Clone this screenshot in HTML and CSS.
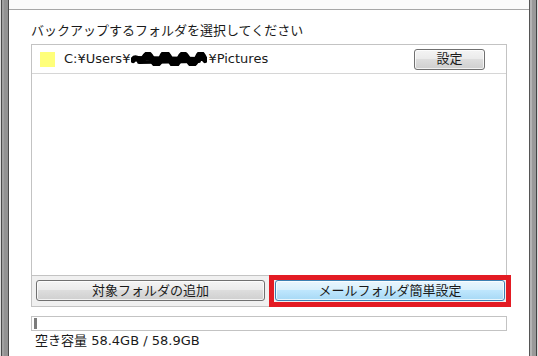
FILE: index.html
```html
<!DOCTYPE html>
<html lang="ja">
<head>
	<meta charset="UTF-8">
	<meta name="viewport" content="width=device-width, initial-scale=1.0">
	<link rel="stylesheet" href="styles.css">
	<title>バックアップ設定</title>
</head>
<body>
	<div class="window">
		<div class="frame frame-left"></div>
		<div class="client">
			<div class="titlebar"></div>
			<div class="content">
				<p class="heading">バックアップするフォルダを選択してください</p>
				<div class="panel">
					<ul class="folder-list">
						<li class="folder">
							<span class="swatch"></span>
							<span class="path">C:¥Users¥<svg class="redact" width="76" height="14" viewBox="0 0 76 14" aria-hidden="true"><path d="M2 8 C6 2 9 13 13 6 S19 3 22 9 S28 12 31 5 S37 2 40 9 S46 13 49 6 S55 3 58 9 S64 12 67 5 S72 4 74 8" fill="none" stroke="#000" stroke-width="6" stroke-linecap="round"/><path d="M4 6 L72 7 M8 10 L68 9" stroke="#000" stroke-width="4" stroke-linecap="round"/></svg>¥Pictures</span>
							<button class="btn btn-small">設定</button>
						</li>
					</ul>
					<div class="actions">
						<button class="btn btn-add">対象フォルダの追加</button>
						<div class="highlight">
							<button class="btn btn-hot">メールフォルダ簡単設定</button>
						</div>
					</div>
				</div>
				<div class="meter"><div class="meter-fill" style="width: 3px;"></div></div>
				<p class="free">空き容量 58.4GB / 58.9GB</p>
			</div>
		</div>
		<div class="frame frame-right"></div>
	</div>
</body>
</html>
```

FILE: styles.css
```css
* {
	box-sizing: border-box;
}

:root {
	--fg: #1a1a1a;
	--line: #c3c3c3;
	--face: #f0f0f0;
	--mark: #e31b23;
}

html, body {
	margin: 0;
	height: 100%;
}

body {
	background: #fff;
	color: var(--fg);
	font-family: "DejaVu Sans", "Noto Sans CJK JP", sans-serif;
	font-size: 13px;
	overflow: hidden;
}

p {
	margin: 0;
}

ul {
	margin: 0;
	padding: 0;
	list-style: none;
}

.window {
	display: flex;
	height: 356px;
}

.frame {
	width: 9px;
	flex-shrink: 0;
}
.frame-left {
	border-left: 1px solid #dcdcdc;
	background: linear-gradient(to right, #4a4a4a 0 1px, #a0a0a0 1px 3px, #929292 3px 7px, #4a4a4a 7px);
}
.frame-right {
	border-right: 1px solid #dcdcdc;
	background: linear-gradient(to right, #555 0 1px, #b4b4b4 1px 3px, #9a9a9a 3px 7px, #444 7px);
}

.client {
	flex: 1;
	display: flex;
	flex-direction: column;
}

.titlebar {
	height: 10px;
	border-bottom: 1px solid #a6a6a6;
	background: #fafafa;
}

.content {
	padding: 0 22px;
}

.heading {
	height: 34px;
	padding-top: 12px;
	line-height: 18px;
}

.panel {
	border: 1px solid var(--line);
}

.folder-list {
	height: 231px;
	background: #fff;
	border-bottom: 1px solid var(--line);
}

.folder {
	display: flex;
	align-items: center;
	height: 29px;
	padding: 0 21px 0 8px;
	border-bottom: 1px solid #d6d6d6;
}

.swatch {
	width: 15px;
	height: 15px;
	margin-right: 9px;
	background: #ffff7a;
}

.path {
	flex: 1;
	display: flex;
	align-items: center;
	line-height: 18px;
}

.redact {
	display: block;
	margin: 0 1px;
}

.btn {
	font: inherit;
	color: inherit;
	height: 21px;
	padding: 0;
	line-height: 18px;
	border: 1px solid #707070;
	border-radius: 3px;
	background: linear-gradient(#f4f4f4 0%, #ebebeb 45%, #dddddd 50%, #cfcfcf 100%);
	box-shadow: inset 0 0 0 1px rgba(255, 255, 255, 0.75);
	cursor: pointer;
}

.btn-small {
	width: 71px;
}

.actions {
	display: flex;
	align-items: flex-start;
	gap: 10px;
	height: 30px;
	padding: 4px 1px 5px 4px;
	background: var(--face);
}
.btn-add {
	width: 229px;
}

/* red box drawn round the button, outside its own flow size */
.highlight {
	margin: -5px -6px -6px;
	padding: 0 1px 1px;
	border: 5px solid var(--mark);
}
.btn-hot {
	display: block;
	width: 230px;
	border-color: #3c7fb1;
	background: linear-gradient(#eaf6fd 0%, #d9f0fc 45%, #bee6fd 50%, #a7d9f5 100%);
}

.meter {
	height: 15px;
	margin-top: 9px;
	padding: 1px;
	border: 1px solid var(--line);
	background: #fff;
}
.meter-fill {
	height: 11px;
	margin-left: 1px;
	background: #7c7c7c;
}

.free {
	padding: 1px 0 0 4px;
	line-height: 18px;
}
```
